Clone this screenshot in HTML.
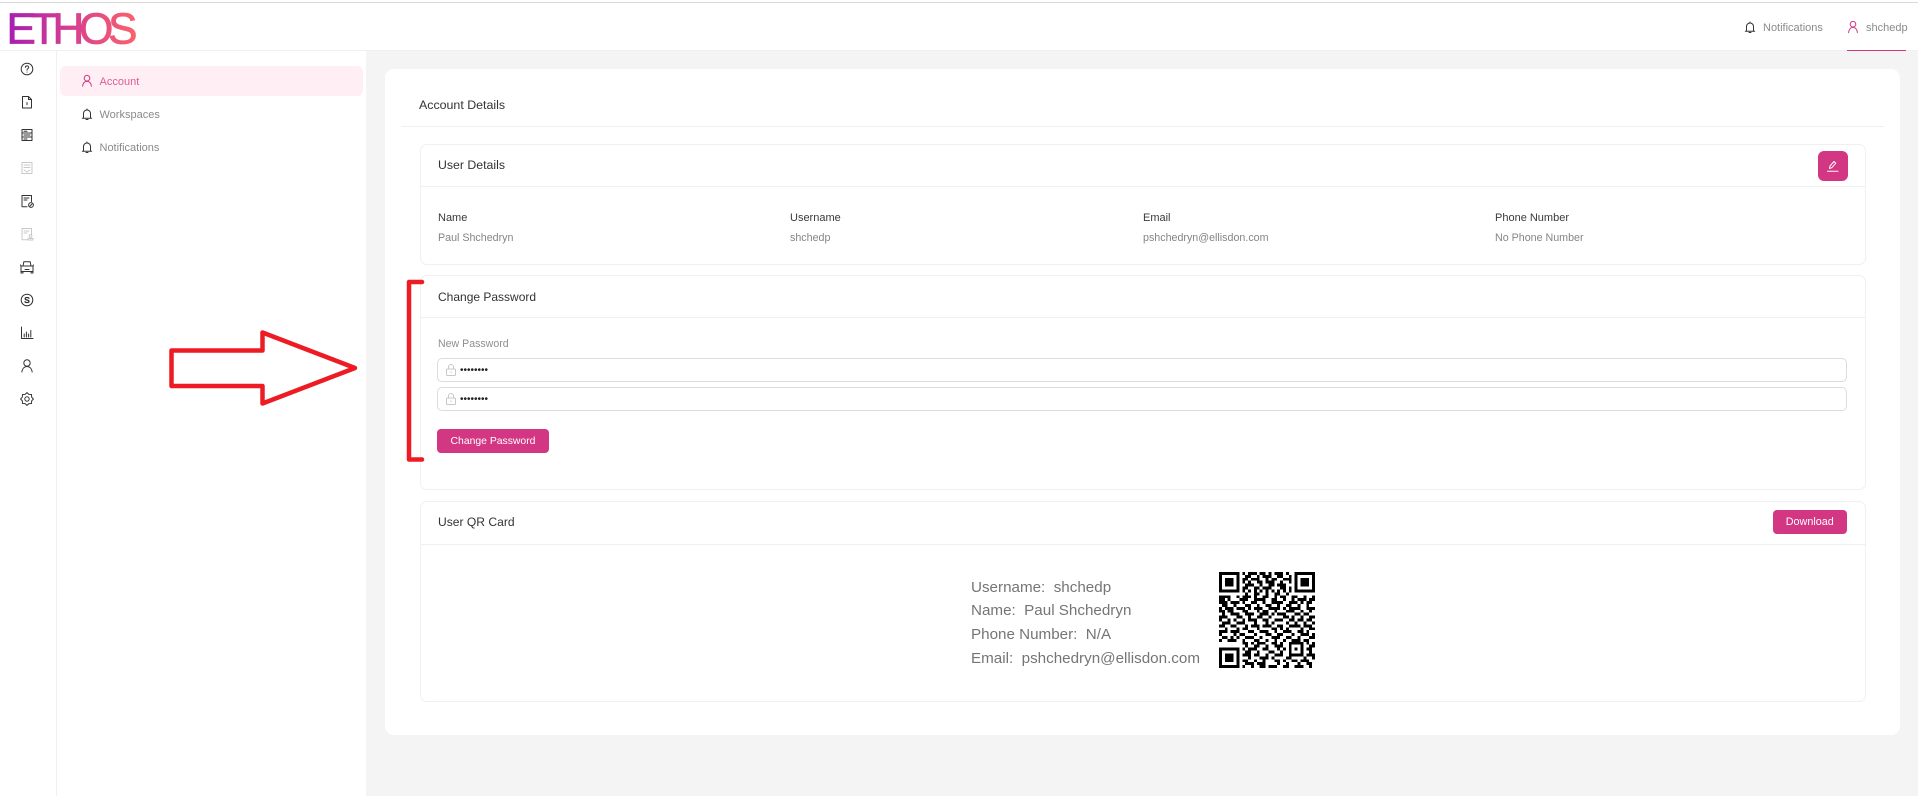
<!DOCTYPE html>
<html><head><meta charset="utf-8"><title>Account</title>
<style>
html,body{margin:0;padding:0}
body{width:1918px;height:796px;position:relative;overflow:hidden;background:#f4f4f4;font-family:"Liberation Sans",sans-serif;color:#333}
div,span,svg{position:absolute;box-sizing:border-box}
.t{line-height:16px;height:16px;white-space:pre}
.panel{left:420px;width:1446px;background:#fff;border:1px solid #f0f0f0;border-radius:7px}
.hr{height:1px;background:#f0f0f0}
.h{font-size:12.3px;color:#333}
.lab{font-size:11px;color:#3a3a3a}
.val{font-size:10.7px;color:#858585}
.side{font-size:11px;color:#8a8a8a}
.btn{background:#d33682;border-radius:4px;color:#fff;text-align:center}
.inp{left:437px;width:1410px;height:24px;background:#fff;border:1px solid #dcdcdc;border-radius:5px}
.ic{fill:none;stroke:#333;stroke-width:1;stroke-linecap:round;stroke-linejoin:round}
.qrt{left:971px;font-size:15.2px;color:#757575;line-height:20px;height:20px;white-space:pre}
</style></head><body>

<!-- top strip and header -->
<div style="left:0;top:0;width:1918px;height:51px;background:#fff;border-bottom:1px solid #f0f0f0"></div>
<div style="left:0;top:2px;width:1918px;height:1px;background:#d9d9d9"></div>
<svg style="left:0;top:4px" width="150" height="46" viewBox="0 0 150 46">
<defs><linearGradient id="g" x1="9" x2="136" y1="0" y2="0" gradientUnits="userSpaceOnUse"><stop offset="0" stop-color="#a81fb2"/><stop offset=".5" stop-color="#d8408f"/><stop offset="1" stop-color="#f9626c"/></linearGradient></defs>
<text x="6.500" y="39.500" font-family="Liberation Sans" font-size="44" textLength="131" lengthAdjust="spacing" fill="url(#g)" stroke="url(#g)" stroke-width="0.8">ETHOS</text>
</svg>

<svg class="ic" style="left:1744px;top:21px" width="12" height="13" viewBox="0 0 12 13"><path d="M2.500 10V5.500a3.500 3.500 0 0 1 7 0V10M1.300 10.200h9.400M6 1v1M5 11.500h2"/></svg>
<span class="t side" style="left:1763px;top:20px">Notifications</span>
<svg class="ic" style="left:1847px;top:20px;stroke:#d33682" width="12" height="14" viewBox="0 0 12 14"><circle cx="6" cy="4.200" r="2.800"/><path d="M1.600 12.600c.4-3 2-5.200 4.400-5.200s4 2.200 4.400 5.200"/></svg>
<span class="t side" style="left:1866px;top:20px">shchedp</span>
<div style="left:1847px;top:50px;width:59px;height:1px;background:#d33682"></div>

<!-- left rail and sidebar -->
<div style="left:0;top:51px;width:366px;height:745px;background:#fff"></div>
<div style="left:56px;top:51px;width:1px;height:745px;background:#f0f0f0"></div>
<div style="left:60px;top:66px;width:303px;height:30px;background:#ffeff4;border-radius:6px"></div>

<svg class="ic" style="left:19px;top:61px" width="16" height="16" viewBox="0 0 16 16"><circle cx="8" cy="8" r="5.800"/><path d="M6.400 6.400c0-2.100 3.300-2.100 3.300 0 0 1.300-1.700 1.200-1.700 2.700M8 11v.1"/></svg>
<svg class="ic" style="left:19px;top:94px" width="16" height="16" viewBox="0 0 16 16"><path d="M3.500 2.500h6l3 3v8.500h-9zM9.500 2.500v3h3M8 8.500v2.200"/></svg>
<svg class="ic" style="left:19px;top:127px" width="16" height="16" viewBox="0 0 16 16"><path d="M3 2.500h10v11H3zM3 6h10M3 10h10M5 8h6M5 4.200h3M5 12h3"/></svg>
<svg class="ic" style="left:19px;top:160px;stroke:#c9c9c9" width="16" height="16" viewBox="0 0 16 16"><path d="M3 2.500h10v11H3zM5 5h6M5 7.500h6M5 10l3 2 3-2"/></svg>
<svg class="ic" style="left:19px;top:193px" width="16" height="16" viewBox="0 0 16 16"><path d="M8 13.800H3V2.500h9.500v6M5 5h5M5 7h3"/><circle cx="12" cy="12" r="2.400"/><path d="M11 13l2-2"/></svg>
<svg class="ic" style="left:19px;top:226px;stroke:#c9c9c9" width="16" height="16" viewBox="0 0 16 16"><path d="M8 13.800H3V2.500h9.500v6M5 5h5M5 7h3"/><circle cx="11.500" cy="10" r="1.400"/><path d="M9 14h5v-1.500H9z"/></svg>
<svg class="ic" style="left:19px;top:259px" width="16" height="16" viewBox="0 0 16 16"><path d="M4 7l.8-4.200h6.400L12 7M2 7h12v5.500H2zM2 7l-.5-1M14 7l.5-1M2 12.500v1.500h2v-1.500M12 12.500v1.500h2v-1.500M6 10.500h4"/></svg>
<svg class="ic" style="left:19px;top:292px" width="16" height="16" viewBox="0 0 16 16"><circle cx="8" cy="8" r="5.800"/><path d="M10 6.300C9.600 5.300 6.200 5 6.200 6.700 6.200 8.500 10 7.600 10 9.400 10 11 6.400 10.700 6 9.700" stroke-width="1.300"/></svg>
<svg class="ic" style="left:19px;top:325px" width="16" height="16" viewBox="0 0 16 16"><path d="M2.500 2v11.500h11.500M5.200 12V9M7.400 12V7M9.600 12V9M11.800 12V5.500"/></svg>
<svg class="ic" style="left:19px;top:358px" width="16" height="16" viewBox="0 0 16 16"><circle cx="8" cy="5" r="3.200"/><path d="M2.800 14c.5-3.300 2.500-5.500 5.200-5.500s4.700 2.200 5.200 5.500"/></svg>
<svg class="ic" style="left:19px;top:391px" width="16" height="16" viewBox="0 0 16 16"><path d="M14.400 8L12.620 9.910 12.530 12.530 9.910 12.620 8 14.400 6.090 12.620 3.470 12.530 3.380 9.910 1.600 8 3.380 6.090 3.470 3.470 6.090 3.380 8 1.600 9.910 3.380 12.530 3.470 12.620 6.090z"/><circle cx="8" cy="8" r="2.200"/></svg>

<svg class="ic" style="left:81px;top:74px;stroke:#d33682" width="12" height="14" viewBox="0 0 12 14"><circle cx="6" cy="4.200" r="2.800"/><path d="M1.600 12.200c.4-3 2-4.800 4.400-4.800s4 1.800 4.400 4.800"/></svg>
<span class="t side" style="left:99.500px;top:73.500px;color:#dc5c97">Account</span>
<svg class="ic" style="left:81px;top:108px" width="12" height="13" viewBox="0 0 12 13"><path d="M2.500 10V5.500a3.500 3.500 0 0 1 7 0V10M1.300 10.200h9.400M6 1v1M5 11.500h2"/></svg>
<span class="t side" style="left:99.500px;top:107px">Workspaces</span>
<svg class="ic" style="left:81px;top:141px" width="12" height="13" viewBox="0 0 12 13"><path d="M2.500 10V5.500a3.500 3.500 0 0 1 7 0V10M1.300 10.200h9.400M6 1v1M5 11.500h2"/></svg>
<span class="t side" style="left:99.500px;top:140px">Notifications</span>

<!-- main card -->
<div style="left:385px;top:69px;width:1515px;height:666px;background:#fff;border-radius:9px"></div>
<span class="t h" style="left:419px;top:97px;font-size:12.400px">Account Details</span>
<div class="hr" style="left:401px;top:126px;width:1483px"></div>

<!-- user details -->
<div class="panel" style="top:144px;height:121px"></div>
<div class="hr" style="left:421px;top:186px;width:1444px"></div>
<span class="t h" style="left:438px;top:157px">User Details</span>
<div class="btn" style="left:1817.500px;top:151px;width:30px;height:30px;border-radius:6px"></div>
<svg style="left:1824px;top:157px;fill:none;stroke:#fff;stroke-width:1;stroke-linejoin:round;stroke-linecap:round" width="18" height="18" viewBox="0 0 18 18"><path d="M5.500 11.500l.5-2.500 4-4.500 1.800 1.700-4 4.500zM3.500 14.200h10.500"/></svg>

<span class="t lab" style="left:438px;top:209.500px">Name</span>
<span class="t val" style="left:438px;top:230px">Paul Shchedryn</span>
<span class="t lab" style="left:790px;top:209.500px">Username</span>
<span class="t val" style="left:790px;top:230px">shchedp</span>
<span class="t lab" style="left:1143px;top:209.500px">Email</span>
<span class="t val" style="left:1143px;top:230px">pshchedryn@ellisdon.com</span>
<span class="t lab" style="left:1495px;top:209.500px">Phone Number</span>
<span class="t val" style="left:1495px;top:230px">No Phone Number</span>

<!-- change password -->
<div class="panel" style="top:275px;height:215px"></div>
<div class="hr" style="left:421px;top:317px;width:1444px"></div>
<span class="t h" style="left:438px;top:289px;font-size:12px">Change Password</span>
<span class="t val" style="left:438px;top:336px;color:#8f8f8f;font-size:10.600px">New Password</span>
<div class="inp" style="top:358px"></div>
<div class="inp" style="top:387px"></div>
<svg style="left:445px;top:362.500px;fill:none;stroke:#c8c8c8;stroke-width:1" width="12" height="14" viewBox="0 0 12 14"><rect x="1.500" y="6" width="9" height="6.500" rx="1"/><path d="M3.500 6V4a2.500 2.500 0 0 1 5 0v2M6 8.500v1.500"/></svg>
<svg style="left:445px;top:391.500px;fill:none;stroke:#c8c8c8;stroke-width:1" width="12" height="14" viewBox="0 0 12 14"><rect x="1.500" y="6" width="9" height="6.500" rx="1"/><path d="M3.500 6V4a2.500 2.500 0 0 1 5 0v2M6 8.500v1.500"/></svg>
<span class="t" style="left:460px;top:362.500px;font-size:10px;color:#222">••••••••</span>
<span class="t" style="left:460px;top:391.500px;font-size:10px;color:#222">••••••••</span>
<div class="btn" style="left:437px;top:429px;width:112px;height:24px;font-size:10.400px;line-height:25px">Change Password</div>

<!-- QR card -->
<div class="panel" style="top:501px;height:201px"></div>
<div class="hr" style="left:421px;top:544px;width:1444px"></div>
<span class="t h" style="left:438px;top:513.500px;font-size:12.100px">User QR Card</span>
<div class="btn" style="left:1772.500px;top:510px;width:74.500px;height:24px;font-size:10.800px;line-height:25px">Download</div>

<span class="qrt" style="top:577.500px">Username:  shchedp</span>
<span class="qrt" style="top:600.500px">Name:  Paul Shchedryn</span>
<span class="qrt" style="top:624.500px">Phone Number:  N/A</span>
<span class="qrt" style="top:648.500px">Email:  pshchedryn@ellisdon.com</span>

<svg style="left:1219px;top:572px" width="96" height="96" viewBox="0 0 33 33" shape-rendering="crispEdges">
<g fill="none" stroke="#000" stroke-width="1">
<path d="M.5 .5h6v6h-6zM26.500 .5h6v6h-6zM.5 26.500h6v6h-6z"/>
<path d="M8 .5h1M10 .5h3M14 .5h2M17 .5h1M19 .5h3M23 .5h1M9 1.500h2M13 1.500h1M15 1.500h3M20 1.500h2M24 1.500h1M8 2.500h2M11 2.500h3M16 2.500h1M18 2.500h2M22 2.500h3M8 3.500h1M10 3.500h1M13 3.500h2M16 3.500h3M21 3.500h1M24 3.500h1M9 4.500h3M14 4.500h1M17 4.500h2M20 4.500h3M8 5.500h2M12 5.500h2M15 5.500h3M21 5.500h2M24 5.500h1M8 6.500h1M10 6.500h1M12 6.500h1M14 6.500h1M16 6.500h1M18 6.500h1M20 6.500h1M22 6.500h1M24 6.500h1M9 7.500h1M12 7.500h2M16 7.500h1M19 7.500h2M23 7.500h1"/>
<path d="M0 8.500h4M6 8.500h1M8 8.500h3M12 8.500h1M15 8.500h2M19 8.500h1M21 8.500h2M25 8.500h2M29 8.500h1M32 8.500h1M0 9.500h2M3 9.500h1M7 9.500h3M12 9.500h4M18 9.500h2M22 9.500h1M25 9.500h1M27 9.500h3M31 9.500h2M0 10.500h3M4 10.500h3M8 10.500h1M11 10.500h2M15 10.500h1M18 10.500h4M24 10.500h3M28 10.500h1M30 10.500h2M1 11.500h2M5 11.500h1M9 11.500h2M13 11.500h1M16 11.500h2M20 11.500h1M23 11.500h2M27 11.500h1M30 11.500h1M0 12.500h1M2 12.500h3M6 12.500h3M10 12.500h1M12 12.500h3M17 12.500h4M22 12.500h1M24 12.500h4M30 12.500h3M0 13.500h2M3 13.500h2M8 13.500h2M13 13.500h1M15 13.500h2M19 13.500h1M23 13.500h3M28 13.500h1M31 13.500h1M1 14.500h1M4 14.500h3M9 14.500h3M14 14.500h3M18 14.500h1M20 14.500h3M26 14.500h2M29 14.500h2M0 15.500h3M6 15.500h2M10 15.500h1M13 15.500h2M17 15.500h1M22 15.500h2M25 15.500h1M28 15.500h1M31 15.500h2M0 16.500h1M3 16.500h1M5 16.500h1M8 16.500h1M10 16.500h3M15 16.500h2M19 16.500h3M24 16.500h2M27 16.500h2M30 16.500h2M1 17.500h3M6 17.500h3M12 17.500h1M16 17.500h1M18 17.500h1M23 17.500h1M26 17.500h1M29 17.500h1M32 17.500h1M0 18.500h2M4 18.500h2M9 18.500h1M11 18.500h3M15 18.500h3M20 18.500h2M24 18.500h4M29 18.500h3M2 19.500h1M6 19.500h1M8 19.500h2M13 19.500h1M18 19.500h2M21 19.500h1M23 19.500h1M28 19.500h1M31 19.500h2M0 20.500h3M4 20.500h3M10 20.500h2M14 20.500h3M19 20.500h1M22 20.500h3M27 20.500h2M30 20.500h1M0 21.500h1M5 21.500h1M7 21.500h2M12 21.500h1M16 21.500h2M20 21.500h2M25 21.500h1M28 21.500h3M32 21.500h1M1 22.500h2M4 22.500h1M6 22.500h1M9 22.500h3M14 22.500h1M18 22.500h3M23 22.500h2M27 22.500h1M31 22.500h2M0 23.500h1M3 23.500h3M8 23.500h1M12 23.500h2M16 23.500h1M19 23.500h1M22 23.500h1M25 23.500h3M29 23.500h2"/>
<path d="M8 24.500h2M11 24.500h1M13 24.500h3M18 24.500h2M21 24.500h1M24 24.500h5M30 24.500h1M32 24.500h1M9 25.500h1M12 25.500h2M16 25.500h1M19 25.500h3M24 25.500h1M28 25.500h1M31 25.500h2M8 26.500h1M10 26.500h3M15 26.500h2M20 26.500h1M22 26.500h1M24 26.500h1M26 26.500h1M28 26.500h1M30 26.500h2M9 27.500h2M13 27.500h1M17 27.500h2M21 27.500h1M24 27.500h1M28 27.500h1M31 27.500h1M8 28.500h3M12 28.500h2M16 28.500h1M19 28.500h3M24 28.500h5M30 28.500h3M10 29.500h1M14 29.500h3M18 29.500h1M23 29.500h2M29 29.500h1M32 29.500h1M8 30.500h2M12 30.500h1M15 30.500h1M19 30.500h2M22 30.500h1M25 30.500h2M28 30.500h3M9 31.500h3M13 31.500h3M20 31.500h1M23 31.500h1M27 31.500h1M30 31.500h2M8 32.500h1M11 32.500h1M14 32.500h2M17 32.500h3M22 32.500h2M26 32.500h3M31 32.500h1"/>
</g>
<g fill="#000"><rect x="2" y="2" width="3" height="3"/><rect x="28" y="2" width="3" height="3"/><rect x="2" y="28" width="3" height="3"/></g>
</svg>

<!-- red annotations -->
<svg style="left:0;top:0;fill:none;stroke:#ed1c24;stroke-width:4.500;stroke-linejoin:round;stroke-linecap:round" width="1918" height="796">
<path d="M171.500 350.500H262.500V332.500L355 368L262.500 403.500V386H171.500Z"/>
<path d="M422 282H409V459.500H422"/>
</svg>
</body></html>
